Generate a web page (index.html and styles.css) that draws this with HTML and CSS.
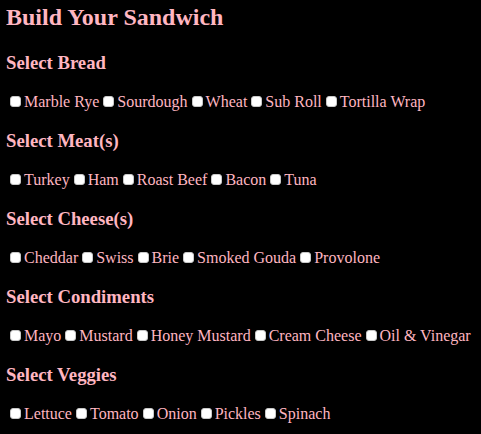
FILE: index.html
```html
<!DOCTYPE html>
<html>
<head>
<meta charset="utf-8">
<link rel="stylesheet" href="styles.css">
</head>
<body>
<h2 class="title">Build Your Sandwich</h2>
<h3 class="section">Select Bread</h3>
<div class="options"><label><input type="checkbox">Marble Rye</label><label><input type="checkbox">Sourdough</label><label><input type="checkbox">Wheat</label><label><input type="checkbox">Sub Roll</label><label><input type="checkbox">Tortilla Wrap</label></div>
<h3 class="section">Select Meat(s)</h3>
<div class="options"><label><input type="checkbox">Turkey</label><label><input type="checkbox">Ham</label><label><input type="checkbox">Roast Beef</label><label><input type="checkbox">Bacon</label><label><input type="checkbox">Tuna</label></div>
<h3 class="section">Select Cheese(s)</h3>
<div class="options"><label><input type="checkbox">Cheddar</label><label><input type="checkbox">Swiss</label><label><input type="checkbox">Brie</label><label><input type="checkbox">Smoked Gouda</label><label><input type="checkbox">Provolone</label></div>
<h3 class="section">Select Condiments</h3>
<div class="options"><label><input type="checkbox">Mayo</label><label><input type="checkbox">Mustard</label><label><input type="checkbox">Honey Mustard</label><label><input type="checkbox">Cream Cheese</label><label><input type="checkbox">Oil &amp; Vinegar</label></div>
<h3 class="section">Select Veggies</h3>
<div class="options"><label><input type="checkbox">Lettuce</label><label><input type="checkbox">Tomato</label><label><input type="checkbox">Onion</label><label><input type="checkbox">Pickles</label><label><input type="checkbox">Spinach</label></div>
</body>
</html>
```
FILE: styles.css
```css
html, body {
  background: #000;
}
body {
  margin: 4px 6px;
  color: #ffb6c1;
  font-family: "Liberation Serif", "Times New Roman", serif;
  font-size: 16px;
}
.title {
  font-size: 24px;
  line-height: 26px;
  margin: 0 0 22px;
}
.section {
  font-size: 18.72px;
  line-height: 22px;
  margin: 18px 0;
}
.options {
  margin: 0;
  line-height: 20px;
  white-space: nowrap;
}
.options input {
  -webkit-appearance: none;
  appearance: none;
  box-sizing: border-box;
  width: 11px;
  height: 11px;
  margin: 0 3px 0 4px;
  padding: 0;
  background: #fff;
  border: 1px solid #c8c8c8;
  border-radius: 3px;
  vertical-align: baseline;
}
```
